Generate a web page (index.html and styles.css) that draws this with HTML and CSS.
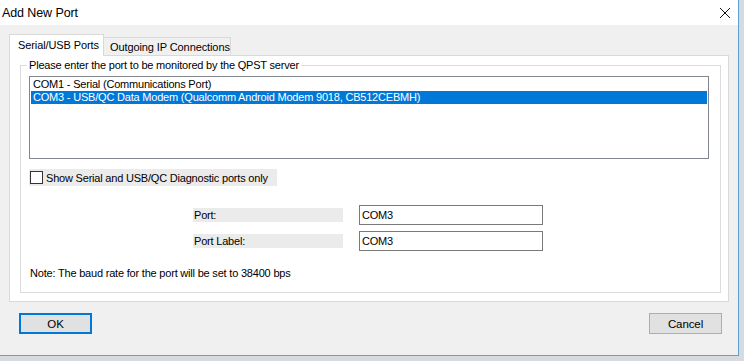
FILE: index.html
```html
<!DOCTYPE html>
<html lang="en">
<head>
  <meta charset="UTF-8" />
  <title>Add New Port</title>
  <link rel="stylesheet" href="styles.css">
</head>
<body>
  <div class="window">
    <div class="titlebar">
      <span class="title">Add New Port</span>
      <svg class="close" width="12" height="12" viewBox="0 0 12 12">
        <path d="M1 1 L11 11 M11 1 L1 11" stroke="#111" stroke-width="1" fill="none"/>
      </svg>
    </div>

    <div class="content">
      <div class="tabs">
        <div class="tab active">Serial/USB Ports</div>
        <div class="tab">Outgoing IP Connections</div>
      </div>

      <div class="panel">
        <fieldset class="group">
          <legend>Please enter the port to be monitored by the QPST server</legend>

          <div class="listbox">
            <div class="item">COM1 - Serial (Communications Port)</div>
            <div class="item selected">COM3 - USB/QC Data Modem (Qualcomm Android Modem 9018, CB512CEBMH)</div>
          </div>

          <label class="check">
            <span class="box"></span>
            Show Serial and USB/QC Diagnostic ports only
          </label>

          <div class="field">
            <span class="field-label">Port:</span>
            <div class="field-input">COM3</div>
          </div>
          <div class="field">
            <span class="field-label">Port Label:</span>
            <div class="field-input">COM3</div>
          </div>

          <p class="note">Note: The baud rate for the port will be set to 38400 bps</p>
        </fieldset>
      </div>

      <div class="buttons">
        <button class="btn default">OK</button>
        <button class="btn">Cancel</button>
      </div>
    </div>
  </div>
</body>
</html>
```

FILE: styles.css
```css
body {
  margin: 0;
  padding: 0;
  background: #d5dbe0;
  font-family: "Liberation Sans", Arial, sans-serif;
  font-size: 11px;
  color: #000;
}
.window {
  width: 738px;
  height: 355px;
  background: #f0f0f0;
  border-right: 1px solid #5f9fd4;
  border-bottom: 1px solid #5f9fd4;
  display: flex;
  flex-direction: column;
}
.titlebar {
  height: 25px;
  background: #fff;
  display: flex;
  align-items: center;
  justify-content: space-between;
  padding: 0 7px 0 2px;
}
.title {
  font-size: 12.5px;
  letter-spacing: -0.1px;
}
.close {
  display: block;
}
.content {
  flex: 1;
  display: flex;
  flex-direction: column;
  padding: 8px 0 0 9px;
}
.tabs {
  display: flex;
  align-items: flex-end;
  height: 22px;
  letter-spacing: -0.1px;
}
.tab {
  width: 127px;
  height: 18px;
  line-height: 18px;
  padding: 0 0 0 6px;
  border: 1px solid #d9d9d9;
  border-bottom: none;
  border-left: none;
  background: #f0f0f0;
  box-sizing: border-box;
}
.tab.active {
  height: 22px;
  line-height: 20px;
  width: 95px;
  padding: 0 0 0 8px;
  background: #fff;
  border-left: 1px solid #d9d9d9;
  position: relative;
  margin-bottom: -1px;
  z-index: 1;
}
.panel {
  width: 720px;
  height: 247px;
  box-sizing: border-box;
  background: #fff;
  border: 1px solid #d9d9d9;
  padding: 2px 7px 0 10px;
}
.group {
  margin: 0;
  height: 235px;
  box-sizing: border-box;
  border: 1px solid #dcdcdc;
  padding: 4px 11px 0 8px;
  letter-spacing: -0.2px;
}
.group legend {
  padding: 0 2px;
  margin-left: -2px;
  line-height: 14px;
}
.listbox {
  height: 83px;
  box-sizing: border-box;
  border: 1px solid #828790;
  padding: 1px 0 0 0;
}
.item {
  height: 13px;
  line-height: 13px;
  padding-left: 3px;
  white-space: nowrap;
}
.item.selected {
  background: #0078d7;
  color: #fff;
  margin: 0 1px 0 1px;
  padding-left: 2px;
}
.check {
  display: flex;
  align-items: center;
  gap: 3px;
  width: 248px;
  height: 17px;
  margin-top: 10px;
  background: #ebebeb;
  white-space: nowrap;
}
.box {
  width: 11px;
  height: 11px;
  margin-left: 1px;
  border: 1px solid #333;
  background: #fff;
}
.field {
  display: flex;
  align-items: center;
  margin-left: 164px;
  height: 20px;
  gap: 16px;
}
.check + .field {
  margin-top: 19px;
}
.field + .field {
  margin-top: 6px;
}
.field-label {
  width: 149px;
  height: 14px;
  line-height: 14px;
  padding-left: 1px;
  background: #ebebeb;
}
.field-input {
  width: 184px;
  height: 20px;
  box-sizing: border-box;
  border: 1px solid #7a7a7a;
  line-height: 18px;
  padding-left: 2px;
}
.note {
  margin: 15px 0 0 1px;
  line-height: 14px;
}
.buttons {
  display: flex;
  justify-content: space-between;
  padding: 11px 16px 0 10px;
}
.btn {
  width: 73px;
  height: 21px;
  padding: 0;
  font-family: "Liberation Sans", Arial, sans-serif;
  font-size: 11.5px;
  letter-spacing: -0.1px;
  background: #e1e1e1;
  border: 1px solid #adadad;
  color: #000;
}
.btn.default {
  border: 2px solid #0078d7;
}
```
